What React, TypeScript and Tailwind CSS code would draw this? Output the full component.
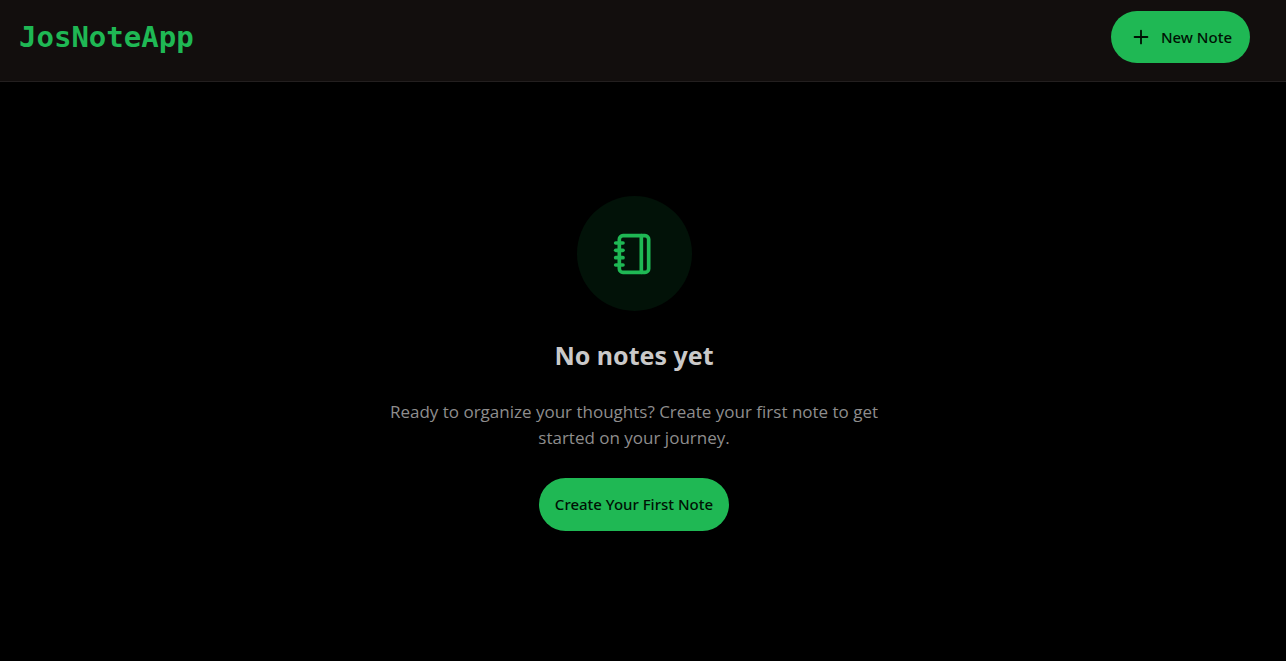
import { Notebook, Plus } from "lucide-react";

const buttonStyle =
  "flex cursor-pointer items-center rounded-full bg-[#1fb854] font-['Noto_Sans',sans-serif] text-[15px] font-medium text-[#001204] hover:bg-[#1aa34a]";

function Navbar() {
  return (
    <header className="border-b border-[#231f1f] bg-[#120e0d] pt-[11px] pr-9 pb-[18px] pl-[19px]">
      <div className="flex items-center justify-between">
        <h1 className="font-['DejaVu_Sans_Mono',monospace] text-[29px] leading-9 font-bold text-[#1fb854]">
          JosNoteApp
        </h1>
        <button type="button" className={`${buttonStyle} h-13 gap-[9px] pr-[18px] pl-[19px]`}>
          <Plus className="size-[22px]" strokeWidth={2} aria-hidden="true" />
          <span>New Note</span>
        </button>
      </div>
    </header>
  );
}

function EmptyState() {
  return (
    <main className="flex flex-col items-center pt-[114px] pr-[18px] pb-12 text-center">
      <div className="flex size-[115px] items-center justify-center rounded-full bg-[#021208]">
        <Notebook className="size-11 text-[#1fb854]" strokeWidth={2} aria-hidden="true" />
      </div>
      <h2 className="mt-[26px] font-['Noto_Sans',sans-serif] text-[25px] leading-9 font-bold text-[#cac9c9]">
        No notes yet
      </h2>
      <p className="mt-[26px] max-w-[508px] text-[17px] leading-[26px] text-[#8e8d8d]">
        Ready to organize your thoughts? Create your first note to get started on your journey.
      </p>
      <button type="button" className={`${buttonStyle} mt-[27px] h-[53px] px-4`}>
        Create Your First Note
      </button>
    </main>
  );
}

export default function App() {
  return (
    <div className="min-h-screen bg-black font-['Open_Sans',sans-serif]">
      <Navbar />
      <EmptyState />
    </div>
  );
}
